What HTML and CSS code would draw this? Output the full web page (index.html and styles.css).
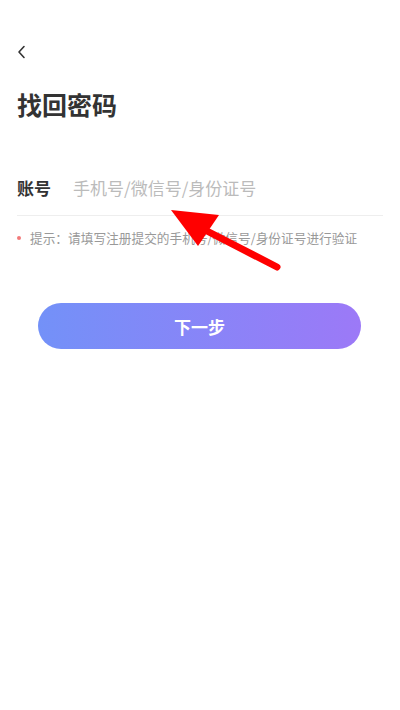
FILE: index.html
```html
<!DOCTYPE html>
<html lang="zh">
<head>
    <meta charset="UTF-8">
    <meta name="viewport" content="width=device-width, initial-scale=1.0">
    <title>找回密码</title>
    <link rel="stylesheet" href="styles.css">
</head>
<body>
    <div class="page">
        <div class="nav-bar">
            <svg class="back-icon" width="10" height="14" viewBox="0 0 10 14">
                <path d="M7 1.5 L2 7 L7 12.5" fill="none" stroke="#333" stroke-width="1.6" stroke-linecap="round" stroke-linejoin="round"/>
            </svg>
        </div>
        <h1 class="title">找回密码</h1>
        <div class="form-row">
            <span class="label">账号</span>
            <span class="placeholder">手机号/微信号/身份证号</span>
        </div>
        <div class="hint">
            <span class="dot"></span>
            <span>提示：请填写注册提交的手机号/微信号/身份证号进行验证</span>
        </div>
        <div class="btn-wrap">
            <button class="next-btn">下一步</button>
        </div>

        <!-- 标注箭头 -->
        <svg class="arrow" width="400" height="710" viewBox="0 0 400 710">
            <line x1="205" y1="230" x2="277" y2="267" stroke="#f00" stroke-width="7" stroke-linecap="round"/>
            <polygon points="171,210 219,215 198,246" fill="#f00"/>
        </svg>
    </div>
</body>
</html>
```

FILE: styles.css
```css
body {
    margin: 0;
    padding: 0;
    background: #fff;
    font-family: "Noto Sans CJK SC", "Noto Sans", sans-serif;
}
.page {
    position: relative;
    width: 400px;
    height: 710px;
    overflow: hidden;
}
.nav-bar {
    display: flex;
    align-items: center;
    padding: 38px 0 0 17px;
    height: 66px;
    box-sizing: border-box;
}
.back-icon {
    display: block;
}
.title {
    margin: 20px 0 0 17px;
    font-size: 25px;
    font-weight: 600;
    color: #333;
    line-height: 36px;
}
.form-row {
    display: flex;
    align-items: center;
    margin: 54px 17px 0 17px;
    padding-bottom: 15px;
    border-bottom: 1px solid #eee;
}
.label {
    font-size: 17px;
    font-weight: bold;
    color: #333;
    width: 56px;
    line-height: 24px;
}
.placeholder {
    font-size: 17px;
    color: #bbb;
    line-height: 24px;
}
.hint {
    display: flex;
    align-items: center;
    margin: 13px 17px 0 17px;
    font-size: 12.7px;
    color: #999;
    line-height: 18px;
}
.dot {
    width: 4px;
    height: 4px;
    border-radius: 50%;
    background: #f27a7a;
    margin: 0 9px 0 0;
}
.btn-wrap {
    padding: 56px 39px 0 38px;
}
.next-btn {
    width: 100%;
    height: 46px;
    border: none;
    border-radius: 23px;
    background: linear-gradient(90deg, #7391f8, #9c79f7);
    color: #fff;
    font-family: inherit;
    font-size: 17px;
    font-weight: 600;
}
.arrow {
    position: absolute;
    left: 0;
    top: 0;
    pointer-events: none;
}
```
